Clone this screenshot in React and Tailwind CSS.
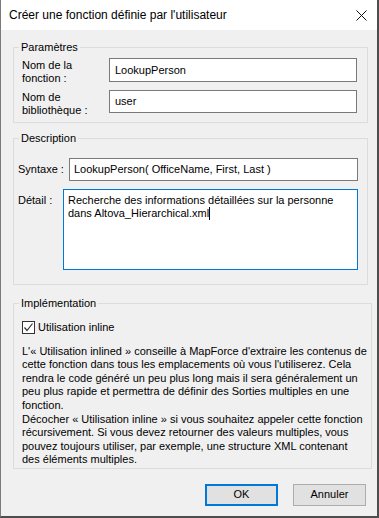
import React from "react";

const font = { fontFamily: '"Liberation Sans", Arial, sans-serif' };

function Legend({ children }) {
  return (
    <legend className="ml-[5px] px-[2px] text-[11px] leading-[14px] text-black">
      {children}
    </legend>
  );
}

export default function App() {
  return (
    <div
      className="w-[379px] h-[518px] flex flex-col bg-[#f0f0f0] border-l border-l-[#7a7a7a] border-r-2 border-r-[#4d4d4d] border-b-2 border-b-[#4d4d4d] text-black overflow-hidden"
      style={font}
    >
      {/* Title bar */}
      <div className="h-[30px] bg-white flex items-center justify-between pl-[8px] pr-[9px] shrink-0">
        <span className="text-[12px] leading-[16px]">Créer une fonction définie par l'utilisateur</span>
        <svg width="11" height="11" viewBox="0 0 11 11" className="mr-[1px]">
          <path d="M0.5 0.5 L10.5 10.5 M10.5 0.5 L0.5 10.5" stroke="#111" strokeWidth="1" fill="none" />
        </svg>
      </div>

      {/* Content */}
      <div className="flex-1 flex flex-col pl-[12px] pr-[9px] text-[11px] leading-[13px]">
        {/* Paramètres */}
        <fieldset className="mt-[10px] border border-[#dcdcdc]">
          <Legend>Paramètres</Legend>
          <div className="flex flex-col gap-[8px] pl-[8px] pr-[9px] pt-[4px] pb-[9px]">
            <div className="flex items-start">
              <div className="w-[87px] h-[24px] pt-[1px]">
                Nom de la
                <br />
                fonction :
              </div>
              <div className="w-[248px] h-[24px] bg-white border border-[#7a7a7a] flex items-center pl-[5px]">
                LookupPerson
              </div>
            </div>
            <div className="flex items-start">
              <div className="w-[87px] h-[23px] pt-[1px]">
                Nom de
                <br />
                bibliothèque :
              </div>
              <div className="w-[248px] h-[23px] bg-white border border-[#7a7a7a] flex items-center pl-[5px]">
                user
              </div>
            </div>
          </div>
        </fieldset>

        {/* Description */}
        <fieldset className="mt-[8px] border border-[#dcdcdc]">
          <Legend>Description</Legend>
          <div className="pl-[4px] pr-[9px] pt-[13px] pb-[14px]">
            <div className="flex items-center">
              <div className="w-[51px]">Syntaxe :</div>
              <div className="w-[289px] h-[23px] bg-white border border-[#7a7a7a] flex items-center pl-[4px] whitespace-nowrap">
                LookupPerson( OfficeName, First, Last )
              </div>
            </div>
            <div className="flex items-start mt-[8px]">
              <div className="w-[45px] pt-[5px]">Détail :</div>
              <div className="w-[295px] h-[81px] bg-white border border-[#0078d7] pl-[4px] pt-[4px] whitespace-nowrap">
                Recherche des informations détaillées sur la personne
                <br />
                <span>dans Altova_Hierarchical.xml</span>
                <span className="inline-block w-px h-[13px] bg-black align-[-3px]" />
              </div>
            </div>
          </div>
        </fieldset>

        {/* Implémentation */}
        <fieldset className="mt-[11px] border border-[#dcdcdc]">
          <Legend>Implémentation</Legend>
          <div className="pl-[8px] pr-[4px] pt-[11px] pb-[1px]">
            <div className="flex items-center">
              <div className="w-[13px] h-[13px] bg-white border border-[#333] flex items-center justify-center">
                <svg width="11" height="11" viewBox="0 0 11 11">
                  <path d="M1.5 5.5 L4 8.5 L9.5 1.5" stroke="#333" strokeWidth="1.2" fill="none" />
                </svg>
              </div>
              <span className="ml-[3px]">Utilisation inline</span>
            </div>
            <div className="mt-[11px] leading-[13.4px] whitespace-nowrap">
              <p>
                L'« Utilisation inlined » conseille à MapForce d'extraire les contenus de
                <br />
                cette fonction dans tous les emplacements où vous l'utiliserez. Cela
                <br />
                rendra le code généré un peu plus long mais il sera généralement un
                <br />
                peu plus rapide et permettra de définir des Sorties multiples en une
                <br />
                fonction.
              </p>
              <p className="mt-[1px]">
                Décocher « Utilisation inline » si vous souhaitez appeler cette fonction
                <br />
                récursivement. Si vous devez retourner des valeurs multiples, vous
                <br />
                pouvez toujours utiliser, par exemple, une structure XML contenant
                <br />
                des éléments multiples.
              </p>
            </div>
          </div>
        </fieldset>

        {/* Buttons */}
        <div className="mt-[15px] flex justify-end gap-[15px] pr-[2px]">
          <button className="w-[73px] h-[22px] bg-[#e1e1e1] border-2 border-[#0078d7] flex items-center justify-center">
            OK
          </button>
          <button className="w-[73px] h-[22px] bg-[#e1e1e1] border border-[#adadad] flex items-center justify-center">
            Annuler
          </button>
        </div>
      </div>
    </div>
  );
}
